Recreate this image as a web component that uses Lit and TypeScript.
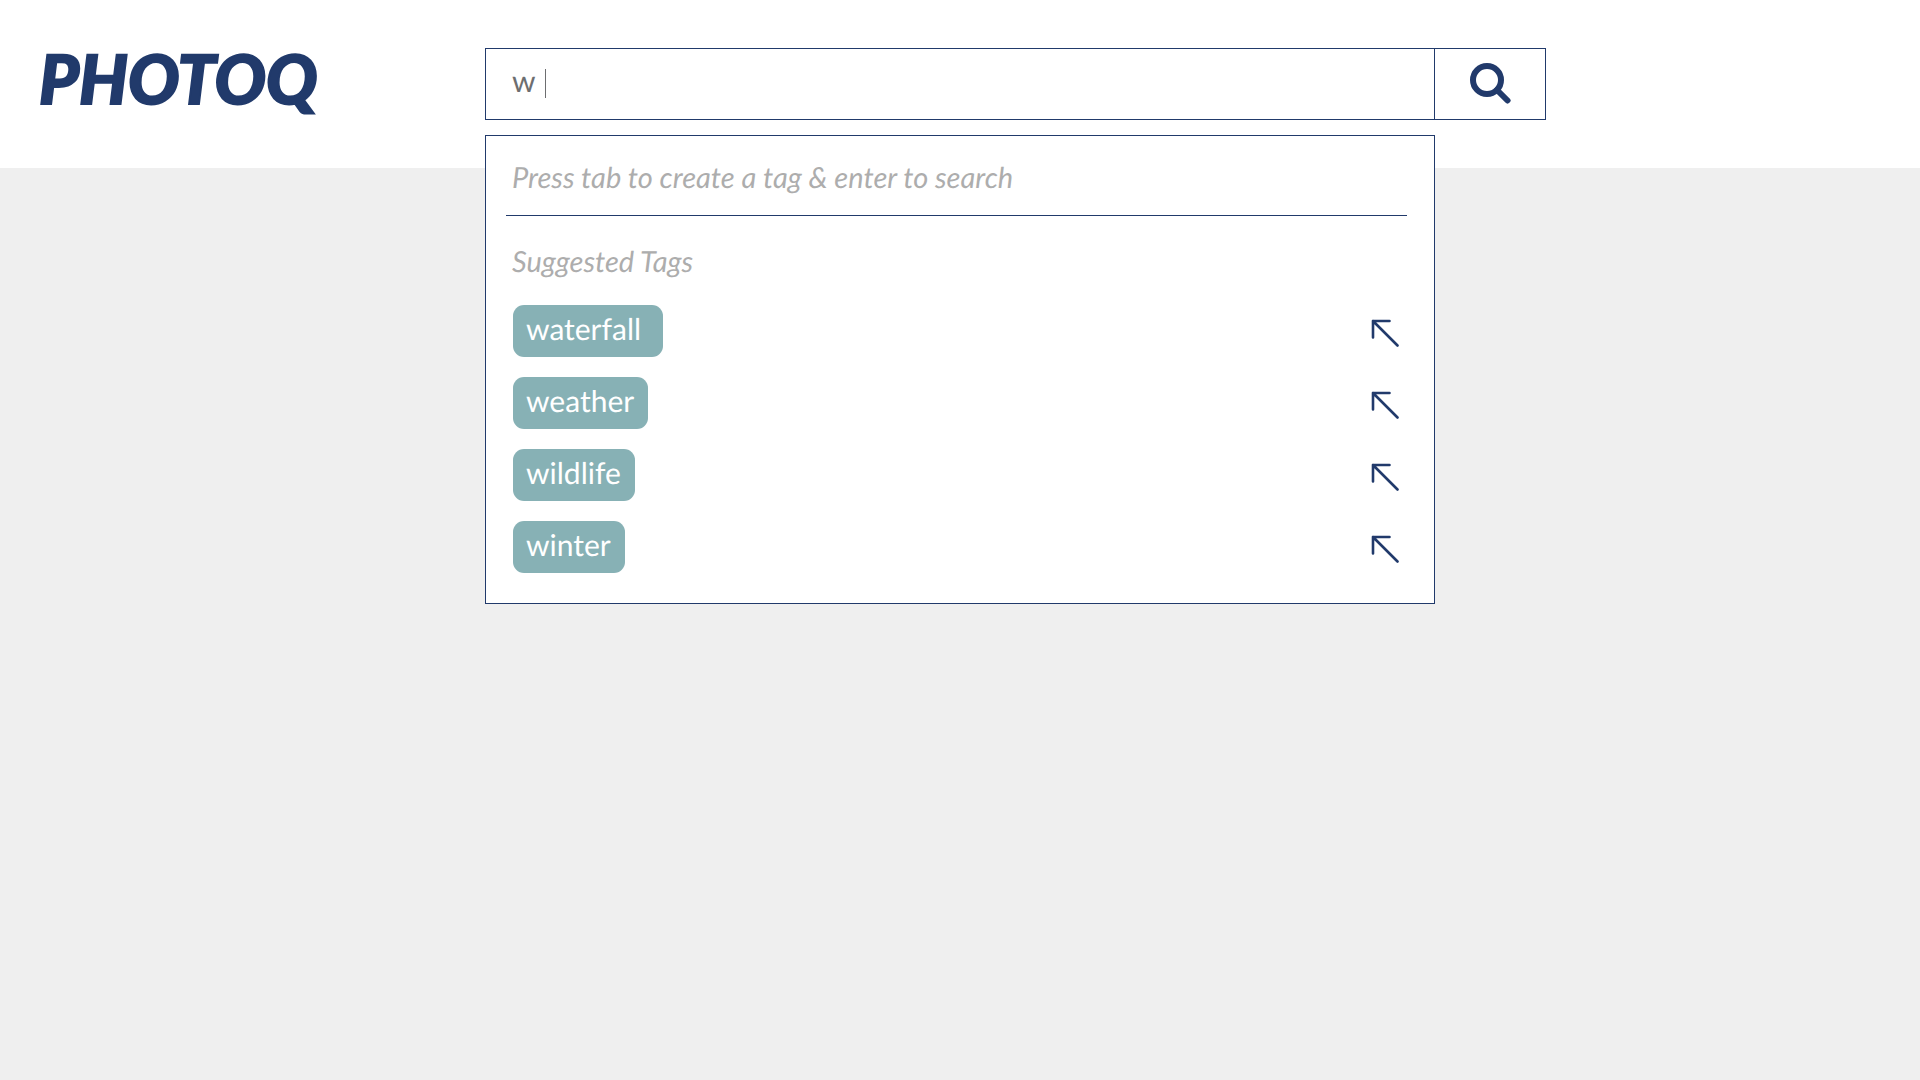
import { LitElement, html, css } from "lit";
import { customElement, property, state } from "lit/decorators.js";

@customElement("tag-suggestion")
export class TagSuggestion extends LitElement {
  @property() tag = "";

  static styles = css`
    :host {
      display: flex;
      align-items: center;
      justify-content: space-between;
    }
    button {
      margin: 0;
      border: 0;
      font: inherit;
      text-rendering: inherit;
      cursor: pointer;
    }
    .chip {
      height: 52px;
      padding: 0 14px 4px 13px;
      border-radius: 11px;
      background: #87b1b5;
      color: #fff;
      line-height: 48px;
      white-space: pre;
    }
    .fill {
      display: flex;
      padding: 4px 0 0;
      background: none;
      color: #213a6b;
    }
    .arrow {
      width: 28px;
      height: 28px;
    }
  `;

  render() {
    return html`
      <button class="chip" type="button">${this.tag}</button>
      <button class="fill" type="button" aria-label="Fill in ${this.tag.trim()}">
        <svg class="arrow" viewBox="0 0 28 28" fill="none" stroke="currentColor"
          stroke-width="2.6" stroke-linecap="round" stroke-linejoin="round">
          <path d="M18.5 2H2V18.5M2 2L26.5 26.5" />
        </svg>
      </button>
    `;
  }
}

@customElement("app-root")
export class AppRoot extends LitElement {
  @state() private query = "w";

  private tags = ["waterfall ", "weather", "wildlife", "winter"];

  static styles = css`
    :host {
      display: block;
      min-height: 100vh;
      background: #efefef;
      color: #213a6b;
      font-family: Lato, "Liberation Sans", sans-serif;
      font-size: 30px;
      line-height: 36px;
      text-rendering: geometricPrecision;
    }
    * {
      box-sizing: border-box;
    }
    .header {
      display: grid;
      grid-template-columns: 446px minmax(0, 1061px);
      align-items: start;
      padding: 48px 39px;
      background: #fff;
    }
    .logo {
      color: inherit;
      font-size: 68px;
      font-style: italic;
      font-weight: 900;
      line-height: 62px;
      text-decoration: none;
      -webkit-text-stroke: 2px currentColor;
    }
    .search {
      display: flex;
      height: 72px;
    }
    .combo {
      position: relative;
      flex: 1;
      min-width: 0;
    }
    .query {
      display: block;
      width: 100%;
      height: 100%;
      margin: 0;
      padding: 0 26px 6px;
      border: 1px solid #213a6b;
      border-radius: 0;
      background: #fff;
      color: #6d6e70;
      font: inherit;
      text-rendering: inherit;
      outline: 0;
      caret-color: transparent;
    }
    .caret {
      position: absolute;
      top: 21px;
      left: 60px;
      width: 1px;
      height: 29px;
      background: #6d6e70;
    }
    .submit {
      display: flex;
      align-items: center;
      justify-content: center;
      width: 111px;
      margin: 0;
      padding: 0;
      border: 1px solid #213a6b;
      border-left: 0;
      background: #fff;
      color: inherit;
      cursor: pointer;
    }
    .glass {
      width: 42px;
      height: 42px;
    }
    .panel {
      position: absolute;
      top: 87px;
      left: 0;
      right: 0;
      padding: 24px 27px 30px 20px;
      border: 1px solid #213a6b;
      background: #fff;
    }
    .hint,
    .title {
      margin: 0;
      padding-left: 6px;
      color: #adadad;
      font-size: 29px;
      font-style: italic;
      font-weight: 400;
    }
    .hint {
      padding-bottom: 19px;
      border-bottom: 1px solid #213a6b;
    }
    .title {
      padding-top: 28px;
    }
    .tags {
      display: grid;
      gap: 20px;
      margin: 0;
      padding: 25px 8px 0 7px;
      list-style: none;
    }
  `;

  private onInput(e: Event) {
    this.query = (e.target as HTMLInputElement).value;
  }

  render() {
    return html`
      <header class="header">
        <a class="logo" href="#">PHOTOQ</a>
        <form class="search" role="search" @submit=${(e: Event) => e.preventDefault()}>
          <div class="combo">
            <input class="query" type="text" aria-label="Search" autocomplete="off"
              .value=${this.query} @input=${this.onInput} />
            <span class="caret"></span>
            <section class="panel">
              <p class="hint">Press tab to create a tag &amp; enter to search</p>
              <h2 class="title">Suggested Tags</h2>
              <ul class="tags">
                ${this.tags.map(
                  (tag) => html`<li><tag-suggestion .tag=${tag}></tag-suggestion></li>`,
                )}
              </ul>
            </section>
          </div>
          <button class="submit" type="submit" aria-label="Search">
            <svg class="glass" viewBox="0 0 42 42" fill="none" stroke="currentColor"
              stroke-width="6" stroke-linecap="round">
              <circle cx="18" cy="17" r="14" />
              <path d="M28 27L38.5 37.5" />
            </svg>
          </button>
        </form>
      </header>
    `;
  }
}
